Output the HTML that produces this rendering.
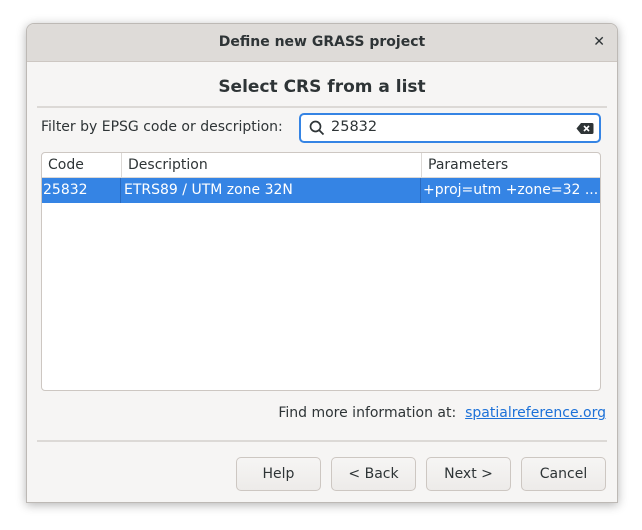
<!DOCTYPE html><html><head><style>
body{margin:0;width:642px;height:530px;background:#fff;font-family:"DejaVu Sans","Liberation Sans",sans-serif;position:relative;overflow:hidden;color:#2e3436}
.win{position:absolute;left:26px;top:23px;width:590px;height:478px;background:#f6f5f4;border:1px solid #bdb9b5;border-radius:8px 8px 0 0;box-shadow:0 2px 10px rgba(0,0,0,.3);overflow:hidden}
.tb{position:absolute;left:0;top:0;width:590px;height:37px;background:#dedbd8;border-bottom:1px solid #cdc7c2;font-weight:bold;font-size:14px;text-align:center;line-height:36px;color:#2e3436}
.x{position:absolute;right:12px;top:0;font-size:14px}
.a{position:absolute;white-space:nowrap}
.btn{position:absolute;top:433px;width:83px;height:32px;border:1px solid #cdc7c2;border-radius:5px;background:linear-gradient(#f6f5f4,#edebe9);text-align:center;line-height:32px;font-size:14px}
</style></head><body>
<div class="win">
<div class="tb">Define new GRASS project<span class="x">✕</span></div>
<div class="a" style="left:0;width:590px;top:53px;text-align:center;font-weight:bold;font-size:17px">Select CRS from a list</div>
<div class="a" style="left:10px;width:570px;top:82px;height:2px;background:#dcd9d6"></div>
<div class="a" style="left:14px;top:95px;font-size:14px">Filter by EPSG code or description:</div>
<div class="a" style="left:272px;top:89px;width:298px;height:26px;border:2px solid #3584e4;border-radius:5px;background:#fff">
<svg class="a" style="left:8px;top:5px" width="16" height="16"><circle cx="6.5" cy="6.5" r="5" fill="none" stroke="#2e3436" stroke-width="1.7"/><path d="M10 10l4.5 4.5" stroke="#2e3436" stroke-width="1.8"/></svg>
<span class="a" style="left:30px;top:4px;font-size:14.5px">25832</span>
<svg class="a" style="left:275px;top:7px" width="18" height="13"><path d="M5 1h11a1.5 1.5 0 011.5 1.5v8A1.5 1.5 0 0116 12H5L0.5 6.5z" fill="#2e3436"/><path d="M8 4l5 5M13 4l-5 5" stroke="#fff" stroke-width="1.6"/></svg>
</div>
<div class="a" style="left:14px;top:128px;width:558px;height:237px;border:1px solid #cdc7c2;border-radius:4px;background:#fff;overflow:hidden;font-size:14px">
<div class="a" style="left:0;top:0;width:558px;height:24px;border-bottom:1px solid #dcd9d6"></div>
<div class="a" style="left:79px;top:0;width:1px;height:24px;background:#dcd9d6"></div>
<div class="a" style="left:379px;top:0;width:1px;height:24px;background:#dcd9d6"></div>
<span class="a" style="left:6px;top:4px">Code</span><span class="a" style="left:86px;top:4px">Description</span><span class="a" style="left:386px;top:4px">Parameters</span>
<div class="a" style="left:0;top:25px;width:558px;height:25px;background:#3584e4;color:#fff">
<div class="a" style="left:78px;top:0;width:1px;height:25px;background:#2a6bc0"></div><div class="a" style="left:378px;top:0;width:1px;height:25px;background:#2a6bc0"></div>
<span class="a" style="left:1px;top:4px">25832</span><span class="a" style="left:82px;top:4px">ETRS89 / UTM zone 32N</span><span class="a" style="left:381px;top:4px">+proj=utm +zone=32 ...</span></div>
</div>
<div class="a" style="right:11px;top:381px;font-size:14px"><span>Find more information at:</span>&nbsp; <span style="color:#1c71d8;text-decoration:underline">spatialreference.org</span></div>
<div class="a" style="left:10px;width:570px;top:416px;height:2px;background:#dcd9d6"></div>
<div class="btn" style="left:209px">Help</div>
<div class="btn" style="left:304px">&lt; Back</div>
<div class="btn" style="left:399px">Next &gt;</div>
<div class="btn" style="left:494px">Cancel</div>
</div>
</body></html>
